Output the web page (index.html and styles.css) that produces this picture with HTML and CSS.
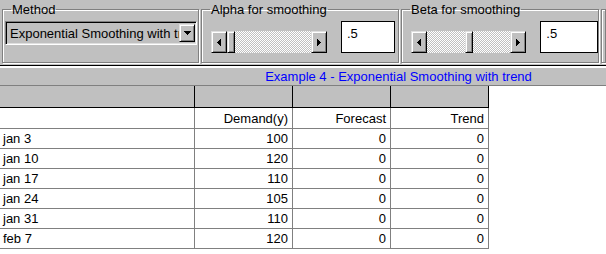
FILE: index.html
```html
<!DOCTYPE html>
<html lang="en">
<head>
    <meta charset="UTF-8">
    <title>Exponential Smoothing with trend</title>
    <link rel="stylesheet" href="styles.css">
</head>
<body>
    <div class="toolbar">
        <fieldset class="group method">
            <legend>Method</legend>
            <div class="group-body">
                <div class="combo">
                    <span class="combo-text">Exponential Smoothing with trend</span>
                    <span class="btn combo-btn">
                        <svg width="7" height="4" viewBox="0 0 7 4"><path d="M0 0h7v1h-1v1h-1v1h-1v1h-1v-1h-1v-1h-1v-1h-1z"/></svg>
                    </span>
                </div>
            </div>
        </fieldset>
        <fieldset class="group">
            <legend>Alpha for smoothing</legend>
            <div class="group-body">
                <div class="scroll">
                    <span class="btn arrow">
                        <svg width="4" height="7" viewBox="0 0 4 7"><path d="M3 0h1v7h-1v-1h-1v-1h-1v-1h-1v-1h1v-1h1v-1h1z"/></svg>
                    </span>
                    <span class="track"><span class="btn thumb" style="margin-left: 0px"></span></span>
                    <span class="btn arrow">
                        <svg width="4" height="7" viewBox="0 0 4 7"><path d="M0 0h1v1h1v1h1v1h1v1h-1v1h-1v1h-1v1h-1z"/></svg>
                    </span>
                </div>
                <div class="textbox">.5</div>
            </div>
        </fieldset>
        <fieldset class="group">
            <legend>Beta for smoothing</legend>
            <div class="group-body">
                <div class="scroll">
                    <span class="btn arrow">
                        <svg width="4" height="7" viewBox="0 0 4 7"><path d="M3 0h1v7h-1v-1h-1v-1h-1v-1h-1v-1h1v-1h1v-1h1z"/></svg>
                    </span>
                    <span class="track"><span class="btn thumb" style="margin-left: 38px"></span></span>
                    <span class="btn arrow">
                        <svg width="4" height="7" viewBox="0 0 4 7"><path d="M0 0h1v1h1v1h1v1h1v1h-1v1h-1v1h-1v1h-1z"/></svg>
                    </span>
                </div>
                <div class="textbox wide">.5</div>
            </div>
        </fieldset>
        <fieldset class="group last"></fieldset>
    </div>

    <div class="caption-band">Example 4 - Exponential Smoothing with trend</div>

    <table class="grid">
        <colgroup>
            <col class="col-label">
            <col class="col-num">
            <col class="col-num">
            <col class="col-num">
        </colgroup>
        <tr class="head-row">
            <td></td><td></td><td></td><td></td>
        </tr>
        <tr class="label-row">
            <td></td><td class="num">Demand(y)</td><td class="num">Forecast</td><td class="num">Trend</td>
        </tr>
        <tr><td>jan 3</td><td class="num">100</td><td class="num">0</td><td class="num">0</td></tr>
        <tr><td>jan 10</td><td class="num">120</td><td class="num">0</td><td class="num">0</td></tr>
        <tr><td>jan 17</td><td class="num">110</td><td class="num">0</td><td class="num">0</td></tr>
        <tr><td>jan 24</td><td class="num">105</td><td class="num">0</td><td class="num">0</td></tr>
        <tr><td>jan 31</td><td class="num">110</td><td class="num">0</td><td class="num">0</td></tr>
        <tr><td>feb 7</td><td class="num">120</td><td class="num">0</td><td class="num">0</td></tr>
    </table>
</body>
</html>
```

FILE: styles.css
```css
body {
    margin: 0;
    background-color: #fff;
    color: #000;
    font-family: "Liberation Sans", Arial, sans-serif;
    font-size: 13px;
    line-height: 15px;
    overflow: hidden;
}
.toolbar {
    display: flex;
    gap: 2px;
    height: 66px;
    box-sizing: border-box;
    padding: 2px 0 0 2px;
    background-color: #c0c0c0;
    border-bottom: 1px solid #000;
    overflow: hidden;
}
.group {
    flex: none;
    width: 198px;
    height: 61px;
    box-sizing: border-box;
    margin: 0;
    padding: 0;
    min-width: 0;
    border: 1px solid #808080;
    box-shadow: 1px 1px 0 #fff, inset 1px 1px 0 #fff;
}
.group.method {
    width: 197px;
}
.group.last {
    flex: 1;
    width: auto;
    margin-top: 7px;
    height: 54px;
}
.group legend {
    margin-left: 8px;
    padding: 0 1px;
    line-height: 15px;
}
.group-body {
    display: flex;
    align-items: flex-end;
    gap: 14px;
    margin: 4px 0 0 9px;
}
.method .group-body {
    margin-left: 2px;
}
.btn {
    display: flex;
    align-items: center;
    justify-content: center;
    box-sizing: border-box;
    background-color: #c0c0c0;
    border: 1px solid;
    border-color: #dfdfdf #000 #000 #dfdfdf;
    box-shadow: inset 1px 1px 0 #fff, inset -1px -1px 0 #808080;
}
.combo {
    display: flex;
    align-items: center;
    width: 192px;
    height: 24px;
    box-sizing: border-box;
    padding: 2px 1px 2px 2px;
    border: 1px solid;
    border-color: #808080 #fff #fff #808080;
    box-shadow: inset 1px 1px 0 #000, inset -1px -1px 0 #dfdfdf;
}
.combo-text {
    flex: 1;
    min-width: 0;
    overflow: hidden;
    white-space: nowrap;
    padding-left: 2px;
}
.combo-btn {
    flex: none;
    width: 16px;
    height: 18px;
}
.scroll {
    display: flex;
    width: 116px;
    height: 22px;
}
.arrow {
    flex: none;
    width: 16px;
    height: 22px;
}
.track {
    flex: 1;
    display: flex;
    background: repeating-conic-gradient(#c0c0c0 0 25%, #fff 0 50%) 0 0 / 2px 2px;
}
.thumb {
    width: 8px;
    height: 22px;
}
.textbox {
    width: 54px;
    height: 32px;
    box-sizing: border-box;
    padding: 4px 5px;
    background-color: #fff;
    border: 1px solid #000;
}
.textbox.wide {
    width: 58px;
}
.caption-band {
    height: 17px;
    line-height: 17px;
    padding-left: 191px;
    text-align: center;
    color: #0000ff;
    background-color: #c0c0c0;
    border-top: 2px solid #fff;
    border-bottom: 1px solid #808080;
}
.grid {
    table-layout: fixed;
    width: 489px;
    border-collapse: separate;
    border-spacing: 0;
}
.col-label {
    width: 195px;
}
.col-num {
    width: 98px;
}
.grid td {
    height: 19px;
    padding: 0 3px;
    white-space: nowrap;
    overflow: hidden;
    border-right: 1px solid #808080;
    border-bottom: 1px solid #808080;
}
.grid td.num {
    text-align: right;
    padding-right: 4px;
}
.head-row td {
    height: 21px;
    background-color: #c0c0c0;
    border-color: #000;
}
.label-row td {
    height: 20px;
}
```
